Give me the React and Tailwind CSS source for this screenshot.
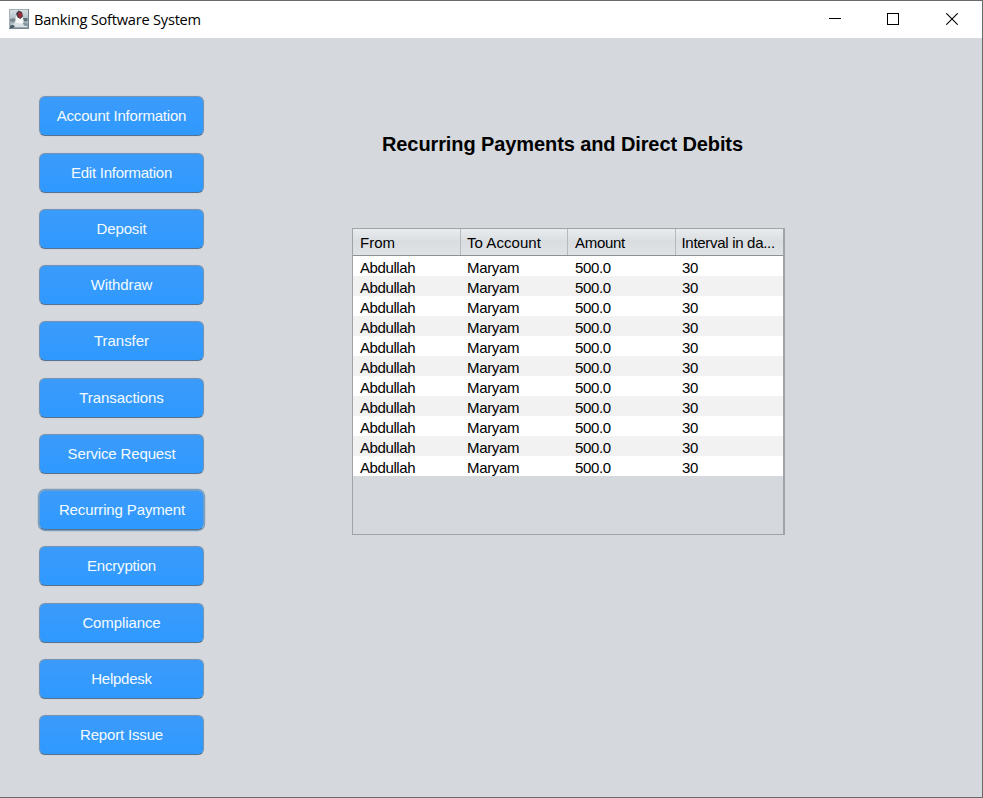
const menu = [
  { label: "Account Information", tracking: "tracking-[-0.21px]" },
  { label: "Edit Information", tracking: "tracking-[-0.25px]" },
  { label: "Deposit", tracking: "tracking-[-0.15px]" },
  { label: "Withdraw", tracking: "tracking-[-0.1px]" },
  { label: "Transfer", tracking: "tracking-[-0.05px]" },
  { label: "Transactions", tracking: "tracking-[-0.08px]" },
  { label: "Service Request", tracking: "tracking-[-0.15px]" },
  { label: "Recurring Payment", tracking: "tracking-[-0.13px]", focused: true },
  { label: "Encryption", tracking: "tracking-[-0.2px]" },
  { label: "Compliance", tracking: "tracking-[-0.1px]" },
  { label: "Helpdesk", tracking: "tracking-[-0.25px]" },
  { label: "Report Issue", tracking: "tracking-[-0.17px]" },
];

const columns = [
  { label: "From", style: "tracking-[0px] pl-[7px] border-r" },
  { label: "To Account", style: "tracking-[0.05px] pl-[6px] border-r" },
  { label: "Amount", style: "tracking-[-0.3px] pl-[7px] border-r" },
  { label: "Interval in da...", style: "tracking-[-0.3px] pl-[5.5px]" },
];

const cellTracking = ["tracking-[-0.4px]", "tracking-[-0.35px]", "tracking-[-0.35px]", "tracking-[-0.3px]"];
const rows = Array.from({ length: 11 }, () => ["Abdullah", "Maryam", "500.0", "30"]);

function DukeIcon() {
  return (
    <svg width="20" height="20" viewBox="0 0 20 20" className="block">
      <defs>
        <linearGradient id="sky" x1="0" y1="0" x2="0" y2="1">
          <stop offset="0" stopColor="#d8e2e6" />
          <stop offset="1" stopColor="#8fa0a8" />
        </linearGradient>
      </defs>
      <rect width="20" height="20" fill="url(#sky)" />
      <path d="M0 0.5H20M0.5 0V20" stroke="#a3b0b6" />
      <path d="M19.5 0V20M0 19.5H20" stroke="#76868e" />
      <path d="M1 10L5 9L7.5 11L5 13L1 12.5Z" fill="#7b888e" />
      <path d="M14 9H18.5V12L15 12.5Z" fill="#5f7078" />
      <path d="M9 4L7 8L6 14L8 16L13 15.5L14.5 13L13.5 7Z" fill="#fafafa" />
      <path d="M9.5 1.5L7 4.5L8.5 8.5L11.5 10L14 7.5L13 3Z" fill="#4a3f44" />
      <path d="M9.3 4.5L11.5 3L13.3 6L11.8 8.8L9.6 7.8Z" fill="#a82a38" />
      <path d="M2 15.5L7 13.5L14 15L18 16.5V18H2Z" fill="#d9e1e4" />
      <path d="M1 17L3.5 15.5L6 17.2L4 19H1Z" fill="#4a5a62" />
      <path d="M14 14L18.5 14.5V17L15 16.5Z" fill="#7d9099" />
    </svg>
  );
}

function TitleBar() {
  return (
    <header className="flex h-[37px] shrink-0 items-center bg-white pl-[9px] pr-[24px]">
      <div className="-mt-px">
        <DukeIcon />
      </div>
      <h1 className="-mt-[2px] ml-[5px] font-['Open_Sans','Noto_Sans',sans-serif] text-[14.6px] leading-[20px] tracking-[-0.22px] text-black">
        Banking Software System
      </h1>
      <div className="-mt-px ml-auto flex items-center">
        <svg width="12" height="12" viewBox="0 0 12 12"><path d="M0 5.5H12" stroke="#000" /></svg>
        <svg className="ml-[46px] mr-[47px]" width="12" height="12" viewBox="0 0 12 12"><rect x="0.5" y="0.5" width="11" height="11" fill="none" stroke="#000" /></svg>
        <svg width="12" height="12" viewBox="0 0 12 12"><path d="M0.3 0.3L11.7 11.7M11.7 0.3L0.3 11.7" stroke="#000" strokeWidth="1.1" /></svg>
      </div>
    </header>
  );
}

function MenuButton({ label, tracking, focused }) {
  return (
    <button
      className={
        "flex h-[40px] w-[165px] items-center justify-center whitespace-nowrap rounded-[6px] border border-b-[#56728f] bg-linear-to-b from-[#3b9bfb] to-[#2f99ff] pb-px text-[15px] leading-[17px] text-[#f4faff] " +
        tracking +
        (focused
          ? " border-[#6c9cc9] pl-px shadow-[0_0_0_1.2px_#7b9fbc]"
          : " border-[#7795b3] shadow-[0_0_1px_#a3acb5]")
      }
    >
      {label}
    </button>
  );
}

function PaymentsTable() {
  return (
    <div className="mt-[72px] h-[307px] w-[433px] border border-[#a0a4a9] border-r-2 text-[15px] text-black">
      <div className="grid h-[27px] grid-cols-[108px_107px_108px_107px] grid-rows-[26px] border-b border-[#8b9199] bg-linear-to-b from-[#e9ecee] via-[#d9dde0] to-[#dfe3e6]">
        {columns.map((c) => (
          <div key={c.label} className={"whitespace-nowrap border-[#b4bac1] leading-[27px] " + c.style}>
            {c.label}
          </div>
        ))}
      </div>
      {rows.map((r, i) => (
        <div
          key={i}
          className={"grid h-[20px] grid-cols-[107px_108px_107px_108px] " + (i % 2 ? "bg-[#f2f2f2]" : "bg-white")}
        >
          {r.map((v, j) => (
            <div key={v} className={"pl-[7px] leading-[24px] " + cellTracking[j]}>{v}</div>
          ))}
        </div>
      ))}
    </div>
  );
}

export default function App() {
  return (
    <div className="flex h-[798px] w-[983px] flex-col overflow-hidden border-t border-r border-b border-[#696a6c] bg-[#d5d8dd] font-['Liberation_Sans',Arial,sans-serif]">
      <TitleBar />
      <main className="flex flex-1">
        <nav className="ml-[39px] mt-[58.3px] flex h-[658.75px] w-[165px] flex-col justify-between">
          {menu.map((m) => (
            <MenuButton key={m.label} {...m} />
          ))}
        </nav>
        <section className="ml-[148px] mt-[94px]">
          <h2 className="ml-[30px] whitespace-nowrap text-[20px] font-bold leading-[24px] tracking-[-0.1px] text-black">
            Recurring Payments and Direct Debits
          </h2>
          <PaymentsTable />
        </section>
      </main>
    </div>
  );
}
